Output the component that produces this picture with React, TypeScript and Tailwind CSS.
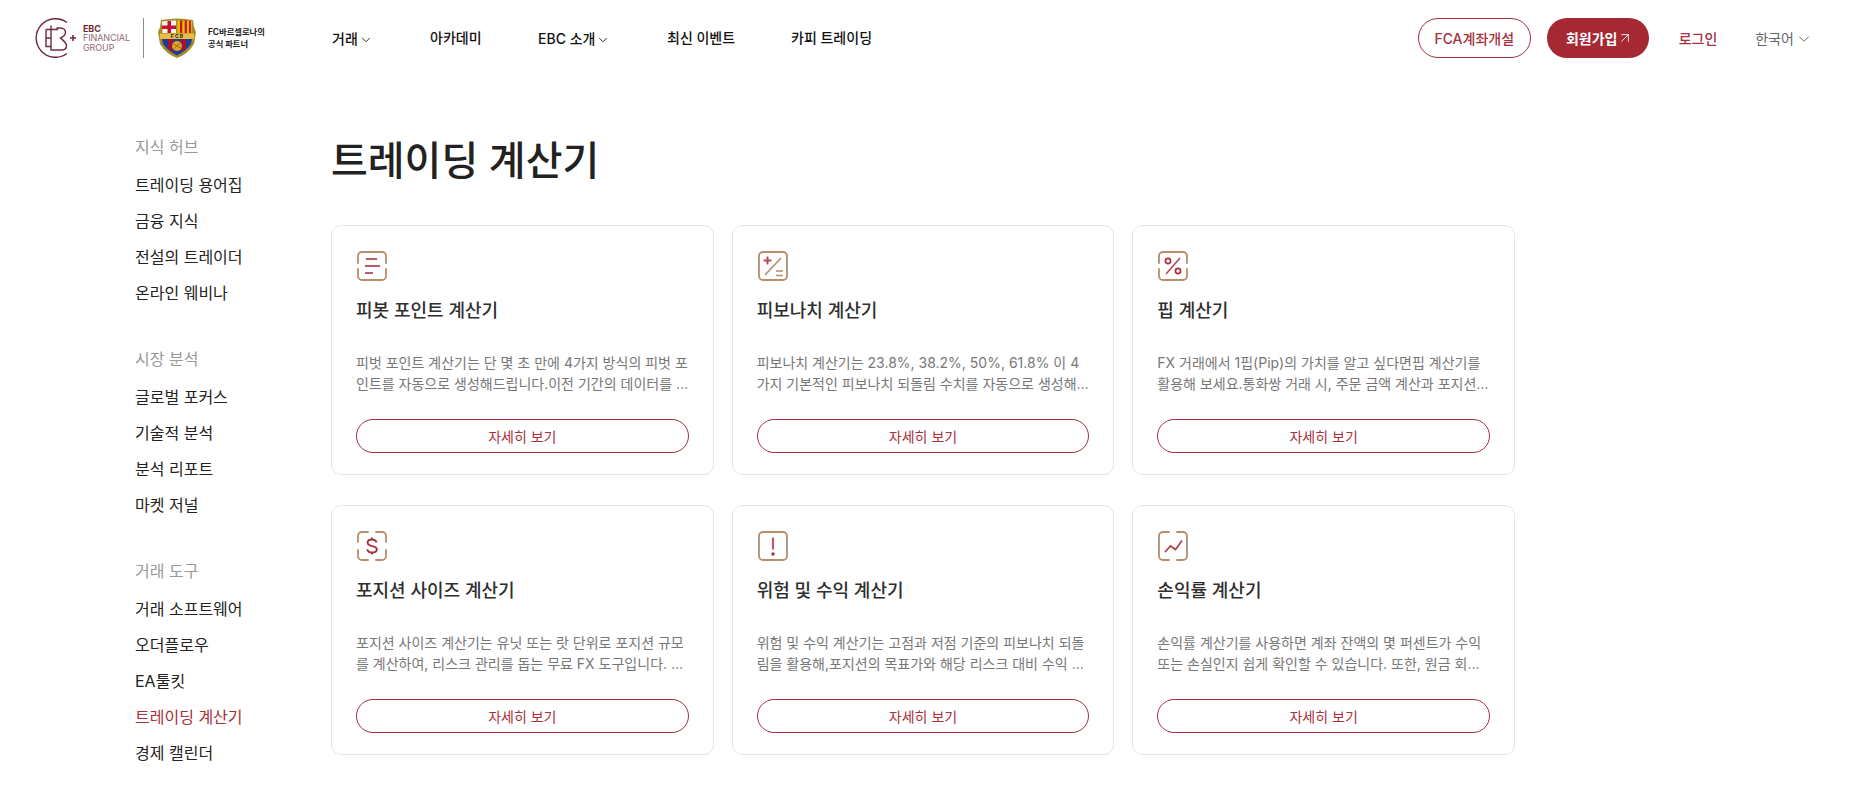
import React from 'react';
import { ChevronDown, ArrowUpRight } from 'lucide-react';

const sections = [
  { title: '지식 허브', items: ['트레이딩 용어집', '금융 지식', '전설의 트레이더', '온라인 웨비나'] },
  { title: '시장 분석', items: ['글로벌 포커스', '기술적 분석', '분석 리포트', '마켓 저널'] },
  { title: '거래 도구', items: ['거래 소프트웨어', '오더플로우', 'EA툴킷', '트레이딩 계산기', '경제 캘린더'] },
];

const BROWN = '#b58e6c';
const RED = '#a6303c';
const ROSE = '#bd5c68';

const Frame = ({ d }: { d: string }) => (
  <path d={d} fill="none" stroke={BROWN} strokeWidth="1.8" strokeLinecap="round" />
);

const FULL = 'M5 1h20a4 4 0 0 1 4 4v20a4 4 0 0 1-4 4H5a4 4 0 0 1-4-4V5a4 4 0 0 1 4-4z';
const SIDES = 'M1 12V5a4 4 0 0 1 4-4h20a4 4 0 0 1 4 4v7M1 18v7a4 4 0 0 0 4 4h20a4 4 0 0 0 4-4v-7';
const CORNERS = 'M1 11V5a4 4 0 0 1 4-4h6M19 1h6a4 4 0 0 1 4 4v6M1 19v6a4 4 0 0 0 4 4h6M19 29h6a4 4 0 0 0 4-4v-6';
const TOPS = 'M11 1H5a4 4 0 0 0-4 4v20a4 4 0 0 0 4 4h6M19 1h6a4 4 0 0 1 4 4v20a4 4 0 0 1-4 4h-6';

const icons = [
  <>
    <Frame d={SIDES} />
    <path d="M9 8h11M8 15h15M8 22h8" stroke={ROSE} strokeWidth="2" fill="none" />
  </>,
  <>
    <Frame d={FULL} />
    <path d="M7 24L23 7" stroke={BROWN} strokeWidth="1.600" />
    <path d="M5.500 9.500h8M9.500 5.500v8" stroke={RED} strokeWidth="2" opacity="0.85" />
    <path d="M18 20h7M18 24.500h7" stroke={BROWN} strokeWidth="1.600" />
  </>,
  <>
    <Frame d={SIDES} />
    <circle cx="10" cy="10" r="2.600" fill="none" stroke={RED} strokeWidth="1.700" />
    <circle cx="20" cy="20" r="2.600" fill="none" stroke={RED} strokeWidth="1.700" />
    <path d="M8 23L22 7" stroke={RED} strokeWidth="1.600" opacity="0.85" />
  </>,
  <>
    <Frame d={CORNERS} />
    <path d="M19.500 11.500c-.6-2-2.200-3-4.500-3-2.600 0-4.400 1.300-4.400 3.300 0 4.400 9.200 2.200 9.200 6.400 0 2-1.900 3.300-4.700 3.300-2.600 0-4.400-1.100-4.900-3.300M15 6.500v2M15 21.500v2" fill="none" stroke={RED} strokeWidth="1.900" />
  </>,
  <>
    <Frame d={FULL} />
    <path d="M15 6.500v12" stroke={ROSE} strokeWidth="2.200" />
    <circle cx="15" cy="23" r="1.700" fill={RED} />
  </>,
  <>
    <Frame d={TOPS} />
    <path d="M7 21l5.500-6 5 3.500L24 9.500" fill="none" stroke={RED} strokeWidth="1.800" opacity="0.9" />
  </>,
];

const cards = [
  {
    title: '피봇 포인트 계산기',
    text: '피벗 포인트 계산기는 단 몇 초 만에 4가지 방식의 피벗 포인트를 자동으로 생성해드립니다.이전 기간의 데이터를 활용해 주요 지지선과 저항선을 빠르게 확인할 수 있습니다.',
  },
  {
    title: '피보나치 계산기',
    text: '피보나치 계산기는 23.8%, 38.2%, 50%, 61.8% 이 4가지 기본적인 피보나치 되돌림 수치를 자동으로 생성해 드립니다. 고점과 저점만 입력하면 됩니다.',
  },
  {
    title: '핍 계산기',
    text: 'FX 거래에서 1핍(Pip)의 가치를 알고 싶다면핍 계산기를 활용해 보세요.통화쌍 거래 시, 주문 금액 계산과 포지션 관리에 도움이 됩니다.',
  },
  {
    title: '포지션 사이즈 계산기',
    text: '포지션 사이즈 계산기는 유닛 또는 랏 단위로 포지션 규모를 계산하여, 리스크 관리를 돕는 무료 FX 도구입니다. 계좌 잔액과 손절 폭만 입력하면 됩니다.',
  },
  {
    title: '위험 및 수익 계산기',
    text: '위험 및 수익 계산기는 고점과 저점 기준의 피보나치 되돌림을 활용해,포지션의 목표가와 해당 리스크 대비 수익 비율을 한눈에 보여 드립니다.',
  },
  {
    title: '손익률 계산기',
    text: '손익률 계산기를 사용하면 계좌 잔액의 몇 퍼센트가 수익 또는 손실인지 쉽게 확인할 수 있습니다. 또한, 원금 회복에 필요한 수익률도 함께 계산됩니다.',
  },
];

const EbcLogo = () => (
  <div className="flex items-center">
    <svg width="48" height="40" viewBox="0 0 48 40" className="shrink-0" fill="none" stroke="#6f2a3a" strokeWidth="1.400">
      <path d="M32 4.500A19.300 19.300 0 1 0 32 35.500" />
      <path d="M11 11.500h12M11 11.500v17h5M11 20h5M16 7.500v24.500h11c3 0 4.500-2 4.500-4.500 0-2.500-2-4-6-7.500 3-1.500 5-3 5-5.500 0-2.500-2-4.500-5-4.500h-4" />
      <path d="M35 20h6M38 17v6" strokeWidth="1.600" />
    </svg>
    <div className="flex w-[45px] flex-col text-[9px] leading-[9.500px] tracking-[-0.1px] text-[#8f6a75]">
      <span className="font-bold text-[#6f2a3a]">EBC</span>
      <span>FINANCIAL</span>
      <span>GROUP</span>
    </div>
  </div>
);

const Crest = () => (
  <svg width="38" height="40" viewBox="0 0 38 40" className="shrink-0">
    <path d="M3 2Q19 -1 35 2L36 9L38 14L36 26Q30 36 19 40Q8 36 2 26L0 14L2 9Z" fill="#a98a2a" />
    <path d="M4 3.500Q10 2.500 18 2.500V15H4.500Z" fill="#f2f2f2" />
    <path d="M9.500 3h3.500v12h-3.500zM4 7.500h14v3.500H4z" fill="#c4122e" />
    <path d="M19.500 2.500Q28 2.500 34 3.500L33.500 15H19.500Z" fill="#edbb00" />
    <path d="M22 2.500h2.200v12.500H22zM26.700 2.500h2.200v12.500h-2.200zM31 3h1.800v12H31z" fill="#c4122e" />
    <path d="M2 15.500h34v5.500H2z" fill="#e8bf45" />
    <path d="M4 21h30l-1 5Q28 33 19 37.500Q10 33 5 26z" fill="#1d3f8f" />
    <path d="M10 21h5v13l-5-4zM23 21h5v9l-5 4z" fill="#a5103a" />
    <circle cx="19" cy="28" r="5" fill="#e0a526" />
    <path d="M15 26l8 4M16 31l6-6" stroke="#7a5a12" strokeWidth="0.700" />
    <text x="19" y="20" textAnchor="middle" fontSize="5" fontWeight="700" fill="#222" fontFamily="Inter">F C B</text>
  </svg>
);

const Navbar = () => (
  <header className="flex h-[76px] items-center pl-[35px] pr-[55px]">
    <div className="flex w-[297px] shrink-0 items-center">
      <EbcLogo />
      <div className="ml-[15px] mr-[14px] h-[40px] w-px bg-[#8a8a8a]" />
      <Crest />
      <div className="ml-[12px] whitespace-nowrap text-[8.300px] font-bold leading-[12px] text-[#222]">
        FC바르셀로나의
        <br />
        공식 파트너
      </div>
    </div>
    <nav className="-mt-[1px] flex items-center text-[14px] font-medium text-[#111]">
      <span className="flex w-[98px] items-center pt-[2px]">
        거래
        <ChevronDown size={14} strokeWidth={1.500} className="ml-[1px] mt-[2px]" />
      </span>
      <span className="w-[108px]">아카데미</span>
      <span className="flex w-[129px] items-center pt-[2px]">
        EBC 소개
        <ChevronDown size={14} strokeWidth={1.500} className="ml-[1px] mt-[2px]" />
      </span>
      <span className="w-[124px]">최신 이벤트</span>
      <span>카피 트레이딩</span>
    </nav>
    <div className="ml-auto flex items-center text-[14px] font-medium">
      <span className="flex h-[40px] w-[113px] items-center justify-center rounded-full border border-[#a6303c] text-[#a6303c]">
        FCA계좌개설
      </span>
      <span className="ml-[16px] flex h-[40px] w-[102px] items-center justify-center rounded-full bg-[#a52833] pl-[4px] font-semibold text-white">
        회원가입
        <ArrowUpRight size={16} strokeWidth={1.300} />
      </span>
      <span className="ml-[30px] text-[#a6303c]">로그인</span>
      <span className="ml-[38px] flex items-center font-normal text-[#666]">
        한국어
        <ChevronDown size={18} strokeWidth={1.200} className="ml-[1px] mt-[1px]" />
      </span>
    </div>
  </header>
);

const Sidebar = () => (
  <aside className="w-[331px] shrink-0 pl-[135px] pt-[59px]">
    {sections.map((s, i) => (
      <div key={s.title} className={i > 0 ? 'mt-[36px]' : ''}>
        <div className="h-[24px] whitespace-nowrap text-[16px] leading-[24px] text-[#999]">{s.title}</div>
        <ul className="mt-[8px]">
          {s.items.map((item) => (
            <li
              key={item}
              className={
                item === '트레이딩 계산기'
                  ? 'h-[36px] whitespace-nowrap text-[16px] leading-[36px] text-[#a6303c]'
                  : 'h-[36px] whitespace-nowrap text-[16px] leading-[36px] text-[#222]'
              }
            >
              {item}
            </li>
          ))}
        </ul>
      </div>
    ))}
  </aside>
);

const Card = ({ title, text, icon }: { title: string; text: string; icon: React.ReactNode }) => (
  <div className="flex h-[250px] flex-col rounded-[10px] border border-[#e4e5ec] px-[24px] pt-[25px]">
    <svg width="30" height="30" viewBox="0 0 30 30" className="ml-[1px]">
      {icon}
    </svg>
    <h3 className="mt-[16px] h-[28px] text-[18px] font-medium leading-[28px] text-[#2e2e2e]">{title}</h3>
    <p className="-mr-[2px] mt-[27px] line-clamp-2 h-[42px] text-[14px] leading-[21px] text-[#777]">{text}</p>
    <a className="mt-[25px] flex h-[34px] items-center justify-center rounded-full border border-[#a6303c] text-[14px] text-[#a6303c]">
      자세히 보기
    </a>
  </div>
);

export default function App() {
  return (
    <div className="min-h-screen bg-white" style={{ fontFamily: 'Inter, "Noto Sans CJK KR", sans-serif' }}>
      <Navbar />
      <div className="flex">
        <Sidebar />
        <main className="w-[1184px]">
          <h1 className="mt-[60px] h-[50px] text-[40px] font-medium leading-[50px] text-[#222]">트레이딩 계산기</h1>
          <div className="mt-[39px] grid grid-cols-3 gap-x-[18px] gap-y-[30px]">
            {cards.map((c, i) => (
              <Card key={c.title} title={c.title} text={c.text} icon={icons[i]} />
            ))}
          </div>
        </main>
      </div>
    </div>
  );
}
